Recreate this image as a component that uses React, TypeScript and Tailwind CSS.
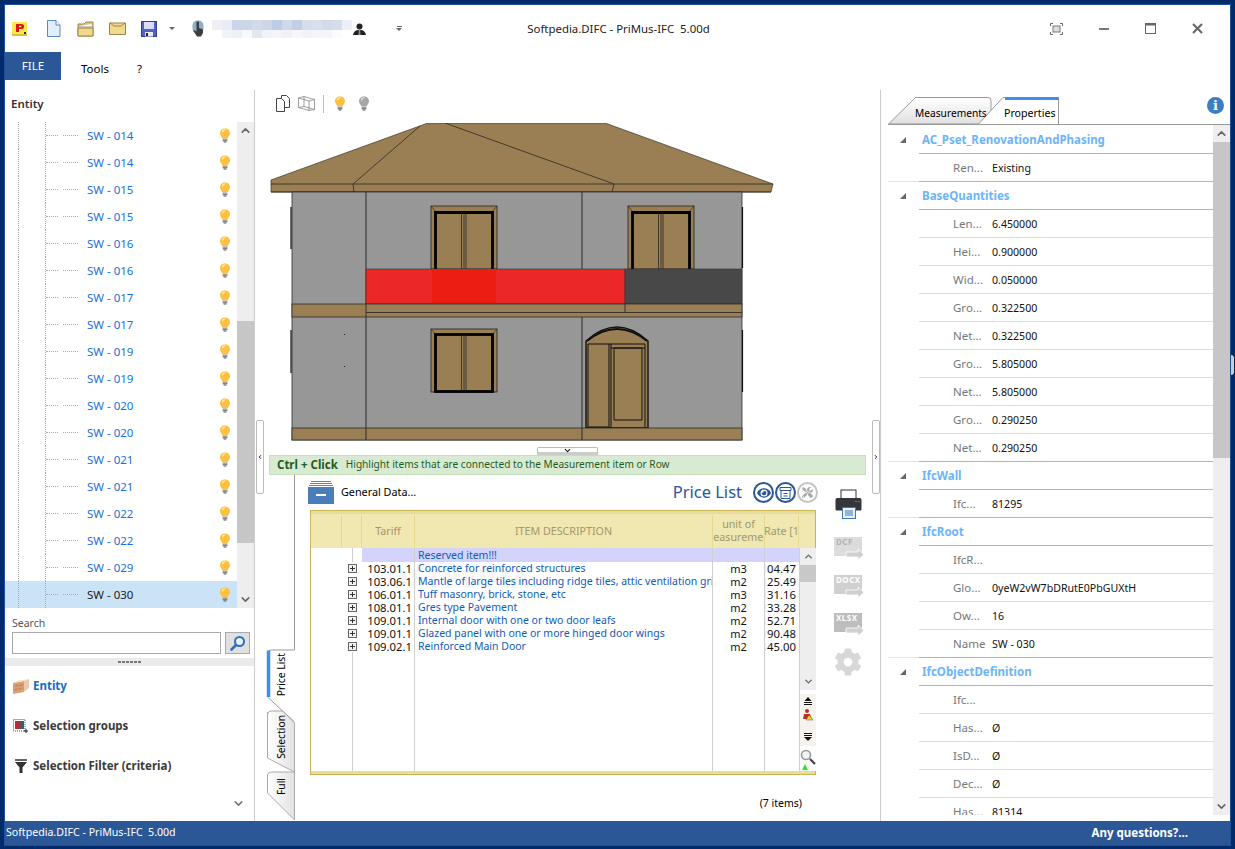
import { FaCog, FaEye, FaTools } from "react-icons/fa";
import { ChevronDown, ChevronLeft, ChevronRight, ChevronUp } from "lucide-react";

const treeRows = ["014", "014", "015", "015", "016", "016", "017", "017", "019", "019", "020", "020", "021", "021", "022", "022", "029", "030"];

const priceRows = [
  ["103.01.1", "Concrete for reinforced structures", "m3", "104.47"],
  ["103.06.1", "Mantle of large tiles including ridge tiles, attic ventilation grids", "m2", "125.49"],
  ["106.01.1", "Tuff masonry, brick, stone, etc", "m3", "131.16"],
  ["108.01.1", "Gres type Pavement", "m2", "133.28"],
  ["109.01.1", "Internal door with one or two door leafs", "m2", "152.71"],
  ["109.01.1", "Glazed panel with one or more hinged door wings", "m2", "190.48"],
  ["109.02.1", "Reinforced Main Door", "m2", "145.00"],
];

const propertyGroups: { title: string; rows: [string, string][] }[] = [
  { title: "AC_Pset_RenovationAndPhasing", rows: [["Ren...", "Existing"]] },
  {
    title: "BaseQuantities",
    rows: [
      ["Len...", "6.450000"],
      ["Hei...", "0.900000"],
      ["Wid...", "0.050000"],
      ["Gro...", "0.322500"],
      ["Net...", "0.322500"],
      ["Gro...", "5.805000"],
      ["Net...", "5.805000"],
      ["Gro...", "0.290250"],
      ["Net...", "0.290250"],
    ],
  },
  { title: "IfcWall", rows: [["Ifc...", "81295"]] },
  {
    title: "IfcRoot",
    rows: [
      ["IfcR...", ""],
      ["Glo...", "0yeW2vW7bDRutE0PbGUXtH"],
      ["Ow...", "16"],
      ["Name", "SW - 030"],
    ],
  },
  {
    title: "IfcObjectDefinition",
    rows: [
      ["Ifc...", ""],
      ["Has...", "Ø"],
      ["IsD...", "Ø"],
      ["Dec...", "Ø"],
      ["Has...", "81314"],
    ],
  },
];

const blurTop = ["bg-[#eeeef4]", "bg-[#e8ecf4]", "bg-[#c9d7e9]", "bg-[#cbd6e8]", "bg-[#d3daea]", "bg-[#d0d4e8]", "bg-[#bccde5]", "bg-[#d0d9ea]", "bg-[#c2cfe4]", "bg-[#d5dcec]", "bg-[#d9dfee]", "bg-[#d3dbeb]", "bg-[#d5dcec]", "bg-[#eceff6]"];
const blurBottom = ["bg-[#ffffff]", "bg-[#f0f3f8]", "bg-[#edf1f7]", "bg-[#f8f9fb]", "bg-[#e3e7f2]", "bg-[#f1f3f8]", "bg-[#f3f5f9]", "bg-[#eff1f6]", "bg-[#f6f7fa]", "bg-[#f1f3f8]", "bg-[#f3f5f9]", "bg-[#f5f6fa]", "bg-[#fafbfc]", "bg-[#ffffff]"];

const Bulb = ({ off = false }: { off?: boolean }) => (
  <svg width="12" height="15" viewBox="0 0 12 15" className="shrink-0">
    <path
      d="M6 .5C3 .5 1 2.600 1 5.200c0 2.100 1.600 3.200 2.300 5h5.400c.7-1.800 2.300-2.900 2.300-5C11 2.600 9 .5 6 .5z"
      fill={off ? "#a8a8a8" : "#fdc040"}
    />
    <path d="M3.500 2.200C4.400 1.400 6.200 1.200 7 1.800 5.400 2.200 4.200 3.400 3.700 5 3 4.200 3 3 3.500 2.200z" fill={off ? "#e8e8e8" : "#ffeeb0"} />
    <rect x="3.600" y="10.500" width="4.800" height="1.400" fill="#9a9a9a" />
    <rect x="3.600" y="12.100" width="4.800" height="1.200" fill="#777" />
    <rect x="4.600" y="13.500" width="2.800" height="1" fill="#555" />
  </svg>
);

const Logo = () => (
  <svg width="17" height="16" viewBox="0 0 17 16">
    <rect x="1" y="1" width="15" height="14" fill="#fbe84a" />
    <rect x="1" y="13" width="15" height="2" fill="#e0c030" />
    <path d="M5 3h5.500c2 0 2.600 1 2.600 2.400S12.400 8 10.500 8H8v3H5z" fill="#d81818" />
    <rect x="8" y="4.800" width="2.400" height="1.400" fill="#fbe84a" />
    <rect x="13" y="11" width="2" height="2" fill="#222" />
  </svg>
);

const NewFile = () => (
  <svg width="15" height="17" viewBox="0 0 15 17">
    <path d="M1.500.5h8.500l4 4.500v11.500H1.500z" fill="#e3eefb" stroke="#5a88bd" />
    <path d="M10 .5v4.500h4" fill="#fff" stroke="#5a88bd" />
  </svg>
);

const Folder = ({ open = false }: { open?: boolean }) => (
  <svg width="17" height={open ? 16 : 13} viewBox={open ? "0 0 17 16" : "0 0 17 13"}>
    {open ? (
      <>
        <path d="M1 3h6l2-2h7v14H1z" fill="#e5c878" stroke="#9b8448" />
        <path d="M3 4.500l12-2v3H3z" fill="#fff" stroke="#aaa" strokeWidth=".5" />
        <path d="M1 7h15v8H1z" fill="#f2d78d" stroke="#9b8448" />
      </>
    ) : (
      <>
        <path d="M.5 1h16v11.500H.5z" fill="#f3d98e" stroke="#9b8448" />
        <path d="M1 1l4 3h7l4-3" fill="none" stroke="#9b8448" />
      </>
    )}
  </svg>
);

const Save = () => (
  <svg width="16" height="16" viewBox="0 0 16 16">
    <rect x=".5" y=".5" width="15" height="15" fill="#5260c0" stroke="#33408c" />
    <rect x="3" y="1" width="10" height="7" fill="#d8dcf4" />
    <rect x="4" y="11" width="8" height="4.500" fill="#e8e8f0" />
    <rect x="5" y="12" width="2" height="3" fill="#222" />
  </svg>
);

const MouseHand = () => (
  <svg width="14" height="17" viewBox="0 0 14 17">
    <path d="M7 .5c3.500 0 5.500 2 5.500 5v3c0 3-2 5-5.500 5s-5.500-2-5.500-5v-3c0-3 2-5 5.500-5z" fill="#8fb0c8" />
    <path d="M5.500 1.500h2.500v6.500l3 1 1 1v3l-2 3.500H6L2.500 11l.5-1 2.500 1.500z" fill="#3d3d3d" />
  </svg>
);

const User = () => (
  <svg width="13" height="12" viewBox="0 0 13 12">
    <circle cx="6.500" cy="3.500" r="3" fill="#222" />
    <path d="M0 12c.5-3 2.500-4.500 4.500-5h4c2 .5 4 2 4.500 5z" fill="#222" />
    <path d="M5.800 7h1.400l.3 5h-2z" fill="#fff" opacity=".5" />
  </svg>
);

const Pages = () => (
  <svg width="14" height="17" viewBox="0 0 14 17" fill="#fff" stroke="#444">
    <path d="M5.500.5h5l3 3v9h-8z" />
    <path d="M.5 3.500h5l3 3v10h-8z" />
  </svg>
);

const Wireframe = () => (
  <svg width="17" height="15" viewBox="0 0 17 15" fill="none" stroke="#777" strokeWidth=".7">
    <path d="M.5 2L6 .5l10.500 3v10l-5.500 1-10.500-3zM.5 2L11 5l5.500-1.500M11 5v9.500M6 .5v10l-5.500 1M6 10.500l10.500 3" />
  </svg>
);

const SearchGlass = () => (
  <svg width="16" height="15" viewBox="0 0 16 15" fill="none">
    <circle cx="9.500" cy="5.500" r="4.500" stroke="#2a6fc0" strokeWidth="2" fill="#e8f0f8" />
    <path d="M6 9l-4.500 4.500" stroke="#2a6fc0" strokeWidth="2.600" strokeLinecap="round" />
  </svg>
);

const Wall = () => (
  <svg width="16" height="15" viewBox="0 0 16 15">
    <path d="M0 4l11-2v11L0 15z" fill="#d8a274" />
    <path d="M11 2l5-2v9l-5 4z" fill="#ecc9a8" />
    <path d="M0 4L5 1.500 16 0l-5 2z" fill="#f3e0c8" />
    <path d="M0 7.500l11-2M0 11l11-2M4 5v3M8 4.500v3M3 9v3M7 8.500v3" stroke="#b88050" strokeWidth=".6" fill="none" />
  </svg>
);

const SelectionGroup = () => (
  <svg width="16" height="15" viewBox="0 0 16 15">
    <rect x=".5" y=".5" width="11.500" height="11.500" fill="none" stroke="#2458a8" strokeDasharray="1 1" />
    <rect x="2" y="2" width="5" height="8" fill="#b52b3a" />
    <rect x="7" y="2" width="4" height="8" fill="#555" />
    <path d="M13 10v4M11 12h4" stroke="#222" />
  </svg>
);

const Funnel = () => (
  <svg width="14" height="15" viewBox="0 0 14 15">
    <rect x="1" y="0" width="12" height="2" fill="#666" />
    <path d="M1 3h12L8.500 8.500V14h-3V8.500z" fill="#333" />
  </svg>
);

const Plus = () => (
  <div className="w-[9px] h-[9px] border border-[#666] bg-[#f2f2f2] flex items-center justify-center">
    <svg width="7" height="7" viewBox="0 0 7 7"><path d="M3.500 1v5M1 3.500h5" stroke="#333" /></svg>
  </div>
);

const Printer = () => (
  <svg width="27" height="30" viewBox="0 0 27 30">
    <rect x="6" y="1" width="15" height="9" fill="#fff" stroke="#333" />
    <path d="M2 9h23c1 0 1.500 1 1.500 2v9c0 1-.5 1.500-1.500 1.500H2C1 21.500.5 21 .5 20v-9C.5 10 1 9 2 9z" fill="#33373c" />
    <rect x="20" y="12" width="2" height="1" fill="#d04040" />
    <rect x="23" y="12" width="2" height="1" fill="#d04040" />
    <rect x="7.500" y="18.500" width="13" height="11" fill="#e8f1fa" stroke="#3d78b0" />
    <path d="M10 22h8M10 24h8M10 26h8" stroke="#3d78b0" />
  </svg>
);

const ExportIcon = ({ label, tone }: { label: string; tone: string }) => (
  <div className="relative w-[30px] h-[25px]">
    <div className={`w-[28px] h-[19px] ${tone} font-bold text-[8px] leading-[10px] pl-[2px] tracking-[0.5px]`}>{label}</div>
    <svg width="30" height="25" viewBox="0 0 30 25" className="absolute left-0 top-0">
      <path d="M12 15h12v-3l6 5.500-6 5.500v-3H12z" fill="#cfcfcf" stroke="#fff" strokeWidth=".8" />
    </svg>
  </div>
);

const ColumnCell = ({ children, line = true, className = "" }: { children?: React.ReactNode; line?: boolean; className?: string }) => (
  <div className={`overflow-x-clip whitespace-nowrap ${line ? "border-r border-[#cfcfcf]" : ""} ${className}`}>{children}</div>
);

const House = () => (
  <svg width="505" height="322" viewBox="270 123 505 322" className="block">
    {/* roof */}
    <path d="M271 180L428 123H605L773 184L771 192H271Z" fill="#9a7f55" stroke="#3a3226" strokeWidth=".7" />
    <path d="M271 184H773M271 192H771M420 126L353 184M445 123L614 184M353 184L354 192M614 184L612 192" fill="none" stroke="#3a3226" strokeWidth=".9" />
    {/* walls */}
    <rect x="292" y="192" width="450" height="248" fill="#979797" stroke="#2c2c2c" strokeWidth=".8" />
    <path d="M366 192V440M582 192V269M582 312V440" stroke="#2c2c2c" strokeWidth="1" />
    <path d="M291 207V249M742.500 207V268M291 330V373M742.500 330V392" stroke="#111" strokeWidth="1.200" />
    <rect x="344" y="334" width="1" height="1" fill="#222" />
    <rect x="344" y="366" width="1" height="1" fill="#222" />
    {/* upper windows */}
    {[431, 628].map((x) => (
      <g key={x}>
        <rect x={x} y="206" width="66" height="63" fill="#9a7f55" stroke="#222" strokeWidth=".8" />
        <path d={`M${x} 206L${x + 5} 212M${x + 66} 206L${x + 61} 212`} stroke="#222" strokeWidth=".6" />
        <path d={`M${x + 4.500} 269V212.500H${x + 61.500}V269`} fill="none" stroke="#000" strokeWidth="2.800" />
        <path d={`M${x + 30.500} 212V269M${x + 33} 212V269M${x + 35} 212V269`} stroke="#1a1a1a" strokeWidth=".7" />
      </g>
    ))}
    {/* balcony */}
    <rect x="366" y="269" width="259" height="35" fill="#ec2727" stroke="#333" strokeWidth=".6" />
    <rect x="432" y="269" width="64" height="35" fill="#ec1e14" />
    <rect x="625" y="269" width="117" height="35" fill="#484848" stroke="#333" strokeWidth=".6" />
    <rect x="292" y="304" width="450" height="13" fill="#9a7f55" stroke="#2c2c2c" strokeWidth=".8" />
    <path d="M366 304V317M366 312.500H742M625 304V312" stroke="#2c2c2c" strokeWidth=".9" />
    {/* lower window */}
    <rect x="431" y="329" width="66" height="63" fill="#9a7f55" stroke="#222" strokeWidth=".8" />
    <path d="M431 329L436 335M497 329L492 335" stroke="#222" strokeWidth=".6" />
    <rect x="435.500" y="334.500" width="57" height="57" fill="none" stroke="#000" strokeWidth="2.800" />
    <path d="M461.500 334V392M464 334V392M466 334V392" stroke="#1a1a1a" strokeWidth=".7" />
    {/* door */}
    <path d="M586 428V341Q617 313 648 341V428Z" fill="#9a7f55" stroke="#111" strokeWidth="1.400" />
    <path d="M587 341Q617 317 647 341" fill="none" stroke="#111" strokeWidth="1.800" />
    <path d="M588 344H645M609 344V428M611 344V428M614 348H642V420H614ZM645 344V428M588 344V428M588 427H609M611 348H645" fill="none" stroke="#111" strokeWidth="1" />
    {/* base */}
    <rect x="292" y="428" width="450" height="12" fill="#9a7f55" stroke="#2c2c2c" strokeWidth=".8" />
    <path d="M366 428V440M582 428V440" stroke="#2c2c2c" strokeWidth="1" />
  </svg>
);

const SideHandle = ({ className, children }: { className: string; children: React.ReactNode }) => (
  <div className={`absolute top-[330px] w-[8px] h-[74px] bg-white border border-[#bbb] rounded-[2px] flex items-center justify-center ${className}`}>{children}</div>
);

export default function App() {
  return (
    <div
      className="w-[1235px] h-[849px] overflow-hidden bg-[#012a6b] pt-[5px] pl-[5px] pr-[5px] pb-[4px] text-[11.5px] text-black"
      style={{ fontFamily: '"Noto Sans", "Liberation Sans", sans-serif' }}
    >
      <div className="relative w-full h-full bg-white flex flex-col shadow-[0_0_0_1px_#1d4f9c]">
        <div className="absolute -right-[4px] top-[350px] w-[3px] h-[20px] bg-[#ccc] rounded-r-full" />

        {/* title bar */}
        <div className="relative h-[47px] shrink-0 flex items-center text-[#222]">
          <div className="ml-[6px] flex items-center"><Logo /></div>
          <div className="ml-[18px]"><NewFile /></div>
          <div className="ml-[16px]"><Folder open /></div>
          <div className="ml-[15px]"><Folder /></div>
          <div className="ml-[15px]"><Save /></div>
          <div className="ml-[12px] w-0 h-0 border-x-[3px] border-x-transparent border-t-[3px] border-t-[#666]" />
          <div className="ml-[16px]"><MouseHand /></div>
          <div className="ml-[7px] flex flex-col">
            <div className="flex">{blurTop.map((c, i) => <div key={i} className={`w-[10px] h-[10px] ${c}`} />)}</div>
            <div className="flex">{blurBottom.map((c, i) => <div key={i} className={`w-[10px] h-[8px] ${c}`} />)}</div>
          </div>
          <div className="ml-[1px]"><User /></div>
          <div className="ml-[30px] flex flex-col items-center gap-[1px]">
            <div className="w-[5px] h-[1px] bg-[#666]" />
            <div className="w-0 h-0 border-x-[3px] border-x-transparent border-t-[3px] border-t-[#666]" />
          </div>
          <div className="flex-1 flex justify-center pr-[215px] whitespace-pre text-[11.4px]">Softpedia.DIFC - PriMus-IFC  5.00d</div>
          <div className="flex items-center w-[180px]">
            <svg width="13" height="12" viewBox="0 0 13 12" fill="none">
              <path d="M.5 3V.5H3M10 .5h2.500V3M12.500 9v2.500H10M3 11.500H.5V9" stroke="#666" />
              <rect x="3" y="3" width="7" height="6" fill="#ddd" stroke="#777" />
            </svg>
            <div className="ml-[36px] w-[10px] h-[2px] bg-[#777]" />
            <svg width="11" height="11" viewBox="0 0 11 11" fill="none" className="ml-[36px]">
              <rect x=".5" y=".5" width="10" height="10" stroke="#666" />
              <rect x="0" y="0" width="11" height="2.500" fill="#666" />
            </svg>
            <svg width="11" height="11" viewBox="0 0 11 11" className="ml-[36px]">
              <path d="M1 1l9 9M10 1l-9 9" stroke="#666" strokeWidth="2" />
            </svg>
          </div>
        </div>

        {/* menu */}
        <div className="h-[38px] shrink-0 flex items-start">
          <div className="w-[56px] h-[28px] bg-[#2b5797] text-white flex items-center justify-center text-[11.5px]">FILE</div>
          <div className="ml-[20px] mt-[8px]">Tools</div>
          <div className="ml-[28px] mt-[8px]">?</div>
        </div>

        <div className="flex-1 flex min-h-0">
          {/* left panel */}
          <div className="w-[250px] shrink-0 border-r border-[#ccc] flex flex-col">
            <div className="h-[32px] shrink-0 pl-[6px] pt-[5px] font-semibold text-[#333]">Entity</div>
            <div className="h-[486px] shrink-0 flex">
              <div className="w-[232px]">
                {treeRows.map((n, i) => (
                  <div key={i} className={`h-[27px] flex ${i === 17 ? "bg-[#cbe3f7]" : ""}`}>
                    <div className="w-[13px]" />
                    <div className="border-l border-dotted border-[#aaa]" />
                    <div className="w-[26px]" />
                    <div className="border-l border-dotted border-[#aaa]" />
                    <div className="flex items-center">
                      <div className="w-[12px] border-t border-dotted border-[#aaa]" />
                      <div className="w-[5px]" />
                      <div className="w-[15px] border-t border-dotted border-[#aaa]" />
                    </div>
                    <div className={`ml-[9px] flex-1 flex items-center ${i === 17 ? "text-[#222]" : "text-[#1a6fdc]"}`}>SW - {n}</div>
                    <div className="mr-[6px] flex items-center"><Bulb /></div>
                  </div>
                ))}
              </div>
              <div className="flex-1 bg-[#eeeeee] flex flex-col">
                <div className="h-[17px] flex items-center justify-center"><ChevronUp size={13} strokeWidth={3} color="#666" /></div>
                <div className="h-[182px]" />
                <div className="h-[222px] bg-[#c6c6c6]" />
                <div className="flex-1" />
                <div className="h-[17px] flex items-center justify-center"><ChevronDown size={13} strokeWidth={3} color="#666" /></div>
              </div>
            </div>
            <div className="h-[50px] shrink-0 pl-[7px] pr-[4px] pt-[8px] text-[#555]">
              <div className="leading-[15px] text-[10.5px]">Search</div>
              <div className="flex gap-[4px] mt-[1px]">
                <div className="w-[209px] h-[22px] bg-white border border-[#aaa]" />
                <div className="w-[25px] h-[22px] bg-[#e0e0e0] border border-[#aaa] flex items-center justify-center"><SearchGlass /></div>
              </div>
            </div>
            <div className="h-[8px] shrink-0 bg-[#ebebeb] flex items-center justify-center gap-[1px]">
              {[0, 1, 2, 3, 4, 5].map((d) => <div key={d} className="w-[3px] h-[2px] bg-[#777]" />)}
            </div>
            <div className="flex-1 relative pl-[8px] flex flex-col font-bold text-[#3a3a3a]">
              <div className="h-[40px] flex items-center gap-[4px]"><div className="w-[16px] flex justify-center"><Wall /></div><span className="text-[#0d6fc8]">Entity</span></div>
              <div className="h-[40px] flex items-center gap-[4px]"><div className="w-[16px] flex justify-center"><SelectionGroup /></div><span>Selection groups</span></div>
              <div className="h-[40px] flex items-center gap-[4px]"><div className="w-[16px] flex justify-center"><Funnel /></div><span>Selection Filter (criteria)</span></div>
              <ChevronDown size={13} strokeWidth={3} color="#777" className="absolute right-[9px] bottom-[11px]" />
            </div>
          </div>

          {/* center panel */}
          <div className="relative w-[626px] shrink-0 border-r border-[#ccc] flex flex-col">
            <div className="h-[33px] shrink-0 flex items-center pl-[21px] pb-[6px]">
              <Pages />
              <div className="ml-[8px]"><Wireframe /></div>
              <div className="ml-[8px] w-[1px] h-[18px] bg-[#bbb]" />
              <div className="ml-[10px]"><Bulb /></div>
              <div className="ml-[12px]"><Bulb off /></div>
            </div>
            <div className="h-[332px] shrink-0 pl-[15px]"><House /></div>
            <div className="absolute left-[282px] top-[357px] w-[61px] h-[8px] bg-white border border-[#bbb] border-b-[3px] border-b-[#ccc] rounded-t-[2px] flex items-center justify-center">
              <ChevronDown size={9} strokeWidth={3} color="#222" />
            </div>
            <SideHandle className="left-[1px]"><ChevronLeft size={10} strokeWidth={4} color="#222" /></SideHandle>
            <SideHandle className="right-0"><ChevronRight size={10} strokeWidth={4} color="#222" /></SideHandle>
            <div className="ml-[14px] w-[597px] h-[20px] shrink-0 bg-[#d9ead3] border border-[#c4e0b8] flex items-center pl-[7px] text-[#1f5c1f] text-[10.1px]">
              <span className="font-bold text-[11.5px]">Ctrl + Click</span>
              <span className="ml-[8px]">Highlight items that are connected to the Measurement item or Row</span>
            </div>

            <div className="flex-1 flex min-h-0">
              {/* vertical tabs */}
              <div className="relative ml-[11px] w-[29px] shrink-0 flex flex-col text-[10.3px]">
                <svg width="29" height="347" viewBox="0 0 29 347" className="absolute left-0 top-0">
                  <defs>
                    <linearGradient id="tabGrey" x1="0" x2="1" y1="0" y2="0">
                      <stop offset="0" stopColor="#ffffff" />
                      <stop offset="1" stopColor="#e2e2e2" />
                    </linearGradient>
                  </defs>
                  <path d="M28.500 0V175" stroke="#999" fill="none" />
                  <path d="M28.500 318V345M28.500 248V297" stroke="#999" fill="none" />
                  <path d="M1.500 237V283L28.500 297V248L17 236H6Q1.500 236 1.500 240Z" fill="url(#tabGrey)" stroke="#aaa" />
                  <path d="M1.500 300V318L28.500 345V297H6Q1.500 297 1.500 301Z" fill="url(#tabGrey)" stroke="#aaa" />
                  <path d="M28.500 175H5Q1.500 175 1.500 179V222L28.500 247" fill="#fff" stroke="#999" />
                  <path d="M2.500 175.500V222" stroke="#3b8ff0" strokeWidth="3.500" fill="none" />
                </svg>
                <div className="relative h-[175px] shrink-0" />
                <div className="relative h-[48px] shrink-0 flex items-end justify-center pl-[3px] pb-[2px]"><span className="[writing-mode:vertical-rl] rotate-180 whitespace-nowrap">Price List</span></div>
                <div className="relative h-[12px] shrink-0" />
                <div className="relative h-[50px] shrink-0 flex items-end justify-center pl-[3px] pb-[1px]"><span className="[writing-mode:vertical-rl] rotate-180 whitespace-nowrap">Selection</span></div>
                <div className="relative h-[15px] shrink-0" />
                <div className="relative h-[20px] shrink-0 flex items-end justify-center pl-[3px]"><span className="[writing-mode:vertical-rl] rotate-180 whitespace-nowrap">Full</span></div>
              </div>

              {/* price list */}
              <div className="w-[521px] shrink-0 pl-[15px] flex flex-col">
                <div className="h-[35px] shrink-0 flex items-center">
                  <svg width="26" height="23" viewBox="0 0 26 23" className="-ml-[2px]">
                    <path d="M3 .5h20M2 2.500h22M1 4.500h24" stroke="#5b86b8" />
                    <rect x="0" y="6" width="26" height="17" fill="#4a7eb8" />
                    <rect x="8" y="13" width="10" height="2" fill="#fff" />
                  </svg>
                  <span className="ml-[7px] text-[10.8px]">General Data...</span>
                  <span className="ml-auto text-[16.5px] text-[#2b5797] mr-[11px]">Price List</span>
                  <div className="flex gap-[1px] -mr-[2px]">
                    <div className="w-[21px] h-[21px] rounded-full border-2 border-[#2b5797] flex items-center justify-center text-[#2b5797]"><FaEye size={14} /></div>
                    <div className="w-[21px] h-[21px] rounded-full border-2 border-[#2b5797] flex items-center justify-center">
                      <svg width="13" height="12" viewBox="0 0 13 12" fill="none" stroke="#2b5797">
                        <path d="M1 .5h11v3H1zM2 3.500v8h9v-8M4.500 6.500h4M4.500 9h4" />
                      </svg>
                    </div>
                    <div className="w-[21px] h-[21px] rounded-full border-2 border-[#c4c4c4] flex items-center justify-center text-[#aaa]"><FaTools size={11} /></div>
                  </div>
                </div>

                <div className="w-[506px] h-[265px] shrink-0 border border-[#c9b450] bg-white flex flex-col">
                  <div className="h-[37px] shrink-0 border-t-[3px] border-t-[#e9dc9c] bg-[#f1e7b0] grid grid-cols-[31px_20px_53px_298px_52px_34px] text-[#a09870] text-[10.7px]">
                    <div className="border-r border-[#e8d88e] my-[1px]" />
                    <div className="border-r border-[#e8d88e] my-[1px]" />
                    <div className="border-r border-[#e8d88e] my-[1px] flex items-center justify-center">Tariff</div>
                    <div className="border-r border-[#e8d88e] my-[1px] flex items-center justify-center">ITEM DESCRIPTION</div>
                    <div className="border-r border-[#e8d88e] my-[1px] flex flex-col items-center justify-center overflow-hidden leading-[13px] whitespace-nowrap">
                      <span>unit of</span>
                      <span>measurement</span>
                    </div>
                    <div className="border-r border-[#e8d88e] my-[1px] flex items-center overflow-hidden whitespace-nowrap"><span className="shrink-0 -ml-[1px]">Rate [1:1]</span></div>
                  </div>
                  <div className="flex-1 flex min-h-0">
                    <div className="relative w-[488px] shrink-0 flex flex-col text-[10.5px]">
                      <div className="absolute left-[60px] top-[17px] text-[26px] font-bold tracking-[2px] leading-[26px] text-[#f5f5f5]">SOFTPEDIA</div>
                      <div className="relative h-[13px] shrink-0 grid grid-cols-[31px_20px_53px_298px_52px_34px] leading-[14px] text-[#0f5cb8]">
                        <ColumnCell line={false} />
                        <ColumnCell line={false} className="bg-[linear-gradient(90deg,transparent_50%,#cfcfcf_50%,#cfcfcf_55%,transparent_55%)]" />
                        <ColumnCell className="bg-[#d3d3fb]" />
                        <ColumnCell className="bg-[#d3d3fb] pl-[3px]">Reserved item!!!</ColumnCell>
                        <ColumnCell className="bg-[#d3d3fb]" />
                        <ColumnCell line={false} className="bg-[#d3d3fb]" />
                      </div>
                      {priceRows.map((r, i) => (
                        <div key={i} className="relative h-[13px] shrink-0 grid grid-cols-[31px_20px_53px_298px_52px_34px] leading-[15px]">
                          <ColumnCell line={false} />
                          <ColumnCell line={false} className="flex items-center justify-center"><Plus /></ColumnCell>
                          <ColumnCell className="text-right pr-[2px] text-[#111] text-[11.3px]">{r[0]}</ColumnCell>
                          <ColumnCell className="pl-[3px] pr-[2px] text-[#0f5cb8]">{r[1]}</ColumnCell>
                          <ColumnCell className="text-center text-[#111] text-[11px]">{r[2]}</ColumnCell>
                          <ColumnCell line={false} className="flex justify-end pr-[3px] text-[#111] text-[11.3px]"><span className="shrink-0">{r[3]}</span></ColumnCell>
                        </div>
                      ))}
                      <div className="relative flex-1 grid grid-cols-[31px_20px_53px_298px_52px_34px]">
                        <ColumnCell line={false} />
                        <ColumnCell line={false} className="bg-[linear-gradient(90deg,transparent_50%,#cfcfcf_50%,#cfcfcf_55%,transparent_55%)]" />
                        <ColumnCell />
                        <ColumnCell />
                        <ColumnCell />
                        <ColumnCell line={false} />
                      </div>
                    </div>
                    <div className="flex-1 flex flex-col items-center bg-white border-l border-[#cfcfcf]">
                      <div className="w-full h-[142px] shrink-0 bg-[#eeeeee] flex flex-col items-center">
                        <div className="h-[17px] flex items-center"><ChevronUp size={11} strokeWidth={3} color="#666" /></div>
                        <div className="w-full h-[17px] bg-[#c8c8c8]" />
                        <div className="flex-1" />
                        <div className="h-[17px] flex items-center"><ChevronDown size={11} strokeWidth={3} color="#666" /></div>
                      </div>
                      <svg width="16" height="81" viewBox="0 0 16 81" className="shrink-0">
                        <rect x="0" y="4" width="16" height="52" fill="#f6f3ee" />
                        <path d="M8 7l3.500 4h-7zM4 12h8v1H4zM4 14h8v1H4z" fill="#111" />
                        <circle cx="7" cy="21" r="2" fill="#c03020" />
                        <path d="M4 24h6l2 5H3z" fill="#c03020" />
                        <path d="M9 25l4 5H6z" fill="#f0e020" stroke="#555" strokeWidth=".5" />
                        <path d="M4 43h8v1H4zM4 45h8v1H4zM4 47h8l-4 4z" fill="#111" />
                        <circle cx="6" cy="65" r="4.500" fill="#f4f4f4" stroke="#999" strokeWidth="1.600" />
                        <path d="M10 69l5 5" stroke="#444" strokeWidth="2.200" />
                        <path d="M5 74l3 6H2z" fill="#22ee22" />
                      </svg>
                    </div>
                  </div>
                  <div className="h-[3px] shrink-0 bg-[#e9dc9c]" />
                </div>
                <div className="w-[492px] mt-[21px] text-right text-[10.5px]">(7 items)</div>
              </div>

              {/* export column */}
              <div className="w-[64px] shrink-0 pt-[14px] flex flex-col items-start pl-[18px]">
                <div className="ml-[1px]"><Printer /></div>
                <div className="mt-[18px]"><ExportIcon label="DCF" tone="bg-[#dcdcdc] text-[#b4b4b4]" /></div>
                <div className="mt-[13px]"><ExportIcon label="DOCX" tone="bg-[#d0d0d0] text-white" /></div>
                <div className="mt-[13px]"><ExportIcon label="XLSX" tone="bg-[#bdbdbd] text-white" /></div>
                <div className="mt-[10px] text-[#d8d8d8]"><FaCog size={28} /></div>
              </div>
            </div>
          </div>

          {/* right panel */}
          <div className="flex-1 min-w-0 flex flex-col">
            <div className="relative h-[35px] shrink-0">
              <svg width="180" height="35" viewBox="0 0 180 35" className="absolute left-0 top-0">
                <defs>
                  <linearGradient id="tabTop" x1="0" x2="0" y1="0" y2="1">
                    <stop offset="0" stopColor="#ffffff" />
                    <stop offset="1" stopColor="#e0e0e0" />
                  </linearGradient>
                </defs>
                <path d="M7.500 34L34.500 7.500H107Q110 7.500 110 10.500V25L98 34Z" fill="url(#tabTop)" stroke="#999" />
                <path d="M97 34.500L122 7.500H177.500V34.500" fill="#fff" stroke="#999" />
                <path d="M124 8.500H177.500" stroke="#3b8ff0" strokeWidth="3" />
              </svg>
              <div className="absolute left-[7px] right-0 bottom-0 h-[1px] bg-[#999]" />
              <span className="absolute left-[34px] top-[15px] leading-[16px] text-[10.2px]">Measurements</span>
              <span className="absolute left-[123px] top-[15px] leading-[16px] text-[10.6px]">Properties</span>
              <div className="absolute right-[6px] top-[7px] w-[17px] h-[17px] rounded-full bg-[#3a7fc4] text-white flex items-center justify-center font-bold text-[13px] leading-none" style={{ fontFamily: '"DejaVu Serif", serif' }}>i</div>
            </div>
            <div className="flex-1 flex min-h-0 pb-[6px]">
              <div className="w-[332px] overflow-hidden pt-[1px]">
                {propertyGroups.map((g) => (
                  <div key={g.title}>
                    <div className="relative h-[28px] flex items-center pl-[41px]">
                      <svg width="7" height="7" viewBox="0 0 7 7" className="absolute left-[19px] top-[11px]"><path d="M6 0v6H0z" fill="#666" /></svg>
                      <span className="font-bold text-[#6cb4fa]">{g.title}</span>
                      <div className="absolute left-[38px] right-0 bottom-0 h-[1px] bg-[#b5b5b5]" />
                    </div>
                    {g.rows.map(([k, v], i) => (
                      <div key={i} className="relative h-[28px] flex items-center pl-[72px]">
                        <span className="w-[39px] text-[#777] whitespace-nowrap">{k}</span>
                        <span className="text-[#111] whitespace-nowrap text-[10.6px] pt-[1px]">{v}</span>
                        <div className={`absolute right-0 bottom-0 h-[1px] left-[38px] ${i === g.rows.length - 1 ? "bg-[#b5b5b5]" : "bg-[#dcdcdc]"}`} />
                        {i === g.rows.length - 1 && <div className="absolute left-[7px] w-[31px] bottom-0 h-[1px] bg-[#e4e4e4]" />}
                      </div>
                    ))}
                  </div>
                ))}
              </div>
              <div className="w-[17px] bg-[#eeeeee] flex flex-col">
                <div className="h-[17px] flex items-center justify-center"><ChevronUp size={13} strokeWidth={3} color="#666" /></div>
                <div className="h-[316px] bg-[#c6c6c6]" />
                <div className="flex-1" />
                <div className="h-[17px] flex items-center justify-center"><ChevronDown size={13} strokeWidth={3} color="#666" /></div>
              </div>
            </div>
          </div>
        </div>

        {/* status bar */}
        <div className="h-[24px] shrink-0 bg-[#2b5797] text-white flex items-center pl-[1px] whitespace-pre">
          <span className="text-[10.6px]">Softpedia.DIFC - PriMus-IFC  5.00d</span>
          <span className="ml-auto mr-[42px] font-bold">Any questions?...</span>
        </div>
      </div>
    </div>
  );
}
